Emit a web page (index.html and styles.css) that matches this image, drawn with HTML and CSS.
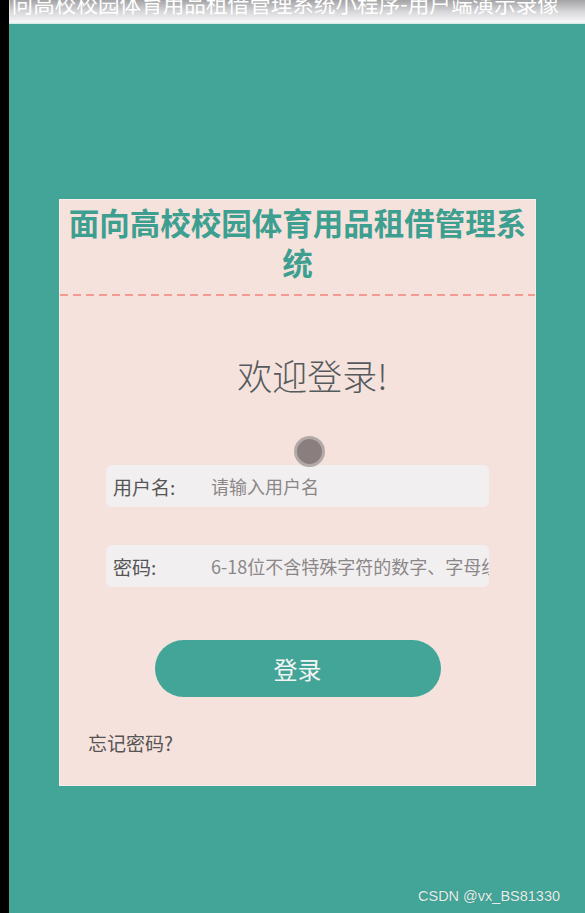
FILE: index.html
```html
<html lang="zh-CN">
  <head>
    <meta charset="utf-8">
    <meta name="viewport" content="width=device-width, initial-scale=1">
    <title>用户登录</title>
    <link rel="stylesheet" href="styles.css">
  </head>

  <body>
    <div class="edge"></div>

    <div class="screen">
      <div class="caption">
        <p>面向高校校园体育用品租借管理系统小程序-用户端演示录像</p>
      </div>

      <div class="card">
        <h1 class="title">面向高校校园体育用品租借管理系统</h1>

        <div class="content">
          <h2 class="welcome">欢迎登录!</h2>
          <div class="avatar"></div>

          <form class="login" action="#" onsubmit="return false;">
            <div class="field">
              <label for="username">用户名:</label>
              <input id="username" type="text" placeholder="请输入用户名">
            </div>
            <div class="field">
              <label for="password">密码:</label>
              <input id="password" type="text" placeholder="6-18位不含特殊字符的数字、字母组合">
            </div>
            <button class="submit" type="submit">登录</button>
          </form>

          <a class="forgot" href="#">忘记密码?</a>
        </div>
      </div>

      <div class="watermark">CSDN @vx_BS81330</div>
    </div>
  </body>
</html>
```

FILE: styles.css
```css
* {
  box-sizing: border-box;
}

body {
  margin: 0;
  display: flex;
  height: 913px;
  overflow: hidden;
  font-family: "Noto Sans CJK SC", "Noto Sans", sans-serif;
  background-color: #000;
}

.edge {
  width: 9px;
  flex-shrink: 0;
  background-color: #000;
}

.screen {
  position: relative;
  flex: 1;
  background-color: #42a597;
}

.caption {
  height: 24px;
  overflow: hidden;
  background: linear-gradient(#a3a3a5 0, #d8d8da 12px, #f3f2f5 21px, #fbfbfd 22px, #d9ecea 23px);
}

.caption p {
  margin: -8px 0 0 -19px;
  white-space: nowrap;
  font-size: 21.6px;
  line-height: 22px;
  color: #fff;
}

.card {
  margin: 175px 0 0 50px;
  width: 477px;
  height: 587px;
  background-color: #f6e2dc;
  border: 1px solid #f6ece9;
}

.title {
  margin: 0;
  padding: 2px 6px 12px;
  text-align: center;
  font-size: 30.5px;
  line-height: 40px;
  font-weight: bold;
  color: #3d9f90;
  border-bottom: 2px solid transparent;
  background-image: repeating-linear-gradient(90deg, #f39a92 0, #f39a92 8px, transparent 8px, transparent 13px);
  background-size: 100% 2px;
  background-position: bottom left;
  background-repeat: no-repeat;
  background-origin: border-box;
}

.content {
  display: flex;
  flex-direction: column;
}

.welcome {
  margin: 54px 0 0 0;
  padding-left: 30px;
  text-align: center;
  font-size: 35px;
  line-height: 50px;
  font-weight: 300;
  color: #555a5c;
}

.avatar {
  position: relative;
  align-self: center;
  margin: 36px 0 -2px 24px;
  width: 31px;
  height: 31px;
  border-radius: 50%;
  background-color: #8a7f7e;
  border: 3px solid #b3a9a8;
}

.login {
  display: flex;
  flex-direction: column;
  margin: 0;
}

.field {
  display: flex;
  align-items: center;
  margin-left: 46px;
  width: 383px;
  height: 42px;
  padding-left: 7px;
  border-radius: 6px;
  background-color: #f2eff1;
}

.field + .field {
  margin-top: 38px;
}

.field label {
  width: 98px;
  flex-shrink: 0;
  font-size: 19px;
  color: #555;
}

.field input {
  flex: 1;
  min-width: 0;
  border: none;
  outline: none;
  background: transparent;
  padding: 0;
  font-family: inherit;
  font-size: 18px;
  color: #555;
}

.field input::placeholder {
  color: #8b8788;
}

.submit {
  align-self: center;
  margin-top: 53px;
  width: 286px;
  height: 57px;
  border: none;
  border-radius: 29px;
  background-color: #42a597;
  color: #f4f4f4;
  font-family: inherit;
  font-size: 24px;
  cursor: pointer;
}

.forgot {
  margin: 33px 0 0 28px;
  font-size: 19px;
  line-height: 26px;
  color: #555;
  text-decoration: none;
}

.watermark {
  position: absolute;
  left: 409px;
  bottom: 9px;
  font-family: "Liberation Sans", Arial, sans-serif;
  font-size: 14.5px;
  color: #e6eeec;
  text-shadow: 0 0 1px rgba(0, 0, 0, 0.25);
}
```
